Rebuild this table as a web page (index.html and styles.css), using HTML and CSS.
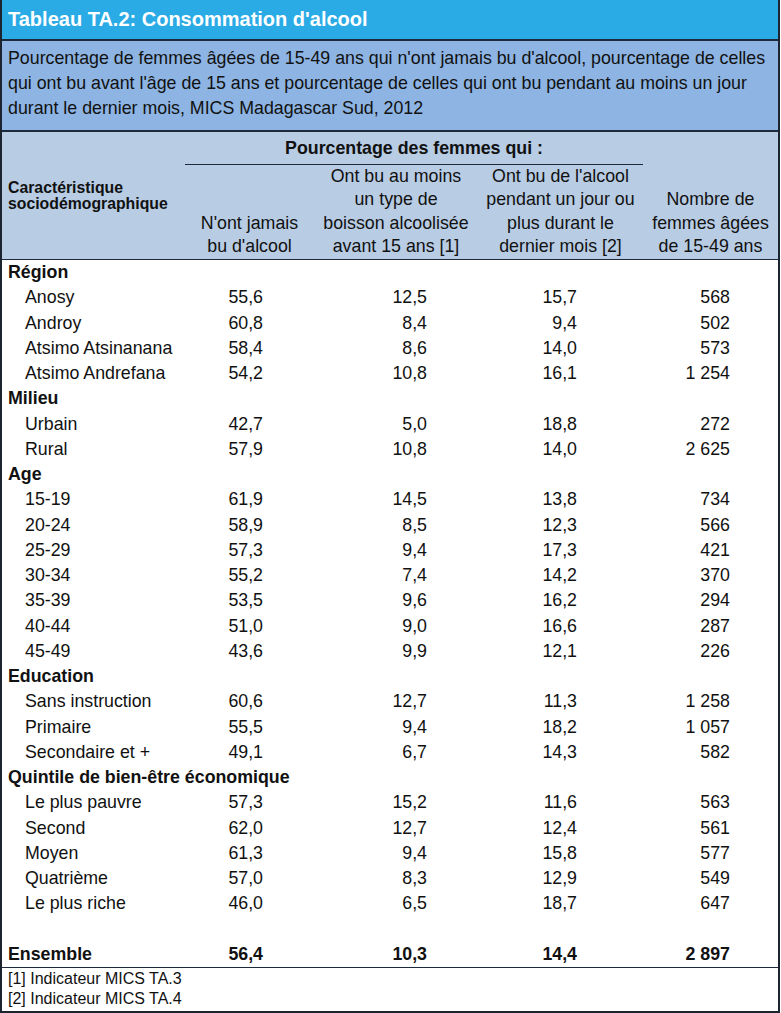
FILE: index.html
```html
<!DOCTYPE html>
<html lang="fr">
<head>
<meta charset="utf-8">
<title>Tableau TA.2</title>
<link rel="stylesheet" href="styles.css">
</head>
<body>
<div class="frame">
  <div class="title">Tableau TA.2: Consommation d'alcool</div>
  <div class="desc">Pourcentage de femmes âgées de 15-49 ans qui n'ont jamais bu d'alcool, pourcentage de celles qui ont bu avant l'âge de 15 ans et pourcentage de celles qui ont bu pendant au moins un jour durant le dernier mois, MICS Madagascar Sud, 2012</div>
  <table class="tbl">
    <colgroup>
      <col class="c0"><col class="c1"><col class="c2"><col class="c3"><col class="c4">
    </colgroup>
    <thead>
      <tr class="h1">
        <th rowspan="2" class="hcar">Caractéristique<br>sociodémographique</th>
        <th colspan="3" class="hgroup">Pourcentage des femmes qui :</th>
        <th rowspan="2" class="hsub">Nombre de<br>femmes âgées<br>de 15-49 ans</th>
      </tr>
      <tr class="h2">
        <th class="hsub">N'ont jamais<br>bu d'alcool</th>
        <th class="hsub">Ont bu au moins<br>un type de<br>boisson alcoolisée<br>avant 15 ans [1]</th>
        <th class="hsub">Ont bu de l'alcool<br>pendant un jour ou<br>plus durant le<br>dernier mois [2]</th>
      </tr>
    </thead>
    <tbody>
      <tr class="grp"><td colspan="5">Région</td></tr>
      <tr><td class="lbl">Anosy</td><td class="n1">55,6</td><td class="n2">12,5</td><td class="n3">15,7</td><td class="n4">568</td></tr>
      <tr><td class="lbl">Androy</td><td class="n1">60,8</td><td class="n2">8,4</td><td class="n3">9,4</td><td class="n4">502</td></tr>
      <tr><td class="lbl">Atsimo Atsinanana</td><td class="n1">58,4</td><td class="n2">8,6</td><td class="n3">14,0</td><td class="n4">573</td></tr>
      <tr><td class="lbl">Atsimo Andrefana</td><td class="n1">54,2</td><td class="n2">10,8</td><td class="n3">16,1</td><td class="n4">1 254</td></tr>
      <tr class="grp"><td colspan="5">Milieu</td></tr>
      <tr><td class="lbl">Urbain</td><td class="n1">42,7</td><td class="n2">5,0</td><td class="n3">18,8</td><td class="n4">272</td></tr>
      <tr><td class="lbl">Rural</td><td class="n1">57,9</td><td class="n2">10,8</td><td class="n3">14,0</td><td class="n4">2 625</td></tr>
      <tr class="grp"><td colspan="5">Age</td></tr>
      <tr><td class="lbl">15-19</td><td class="n1">61,9</td><td class="n2">14,5</td><td class="n3">13,8</td><td class="n4">734</td></tr>
      <tr><td class="lbl">20-24</td><td class="n1">58,9</td><td class="n2">8,5</td><td class="n3">12,3</td><td class="n4">566</td></tr>
      <tr><td class="lbl">25-29</td><td class="n1">57,3</td><td class="n2">9,4</td><td class="n3">17,3</td><td class="n4">421</td></tr>
      <tr><td class="lbl">30-34</td><td class="n1">55,2</td><td class="n2">7,4</td><td class="n3">14,2</td><td class="n4">370</td></tr>
      <tr><td class="lbl">35-39</td><td class="n1">53,5</td><td class="n2">9,6</td><td class="n3">16,2</td><td class="n4">294</td></tr>
      <tr><td class="lbl">40-44</td><td class="n1">51,0</td><td class="n2">9,0</td><td class="n3">16,6</td><td class="n4">287</td></tr>
      <tr><td class="lbl">45-49</td><td class="n1">43,6</td><td class="n2">9,9</td><td class="n3">12,1</td><td class="n4">226</td></tr>
      <tr class="grp"><td colspan="5">Education</td></tr>
      <tr><td class="lbl">Sans instruction</td><td class="n1">60,6</td><td class="n2">12,7</td><td class="n3">11,3</td><td class="n4">1 258</td></tr>
      <tr><td class="lbl">Primaire</td><td class="n1">55,5</td><td class="n2">9,4</td><td class="n3">18,2</td><td class="n4">1 057</td></tr>
      <tr><td class="lbl">Secondaire et +</td><td class="n1">49,1</td><td class="n2">6,7</td><td class="n3">14,3</td><td class="n4">582</td></tr>
      <tr class="grp"><td colspan="5">Quintile de bien-être économique</td></tr>
      <tr><td class="lbl">Le plus pauvre</td><td class="n1">57,3</td><td class="n2">15,2</td><td class="n3">11,6</td><td class="n4">563</td></tr>
      <tr><td class="lbl">Second</td><td class="n1">62,0</td><td class="n2">12,7</td><td class="n3">12,4</td><td class="n4">561</td></tr>
      <tr><td class="lbl">Moyen</td><td class="n1">61,3</td><td class="n2">9,4</td><td class="n3">15,8</td><td class="n4">577</td></tr>
      <tr><td class="lbl">Quatrième</td><td class="n1">57,0</td><td class="n2">8,3</td><td class="n3">12,9</td><td class="n4">549</td></tr>
      <tr><td class="lbl">Le plus riche</td><td class="n1">46,0</td><td class="n2">6,5</td><td class="n3">18,7</td><td class="n4">647</td></tr>
      <tr class="blank"><td colspan="5"></td></tr>
      <tr class="total"><td class="glbl">Ensemble</td><td class="n1">56,4</td><td class="n2">10,3</td><td class="n3">14,4</td><td class="n4">2 897</td></tr>
    </tbody>
  </table>
  <div class="notes">
    <div>[1] Indicateur MICS TA.3</div>
    <div>[2] Indicateur MICS TA.4</div>
  </div>
</div>
</body>
</html>
```

FILE: styles.css
```css
html, body {
  margin: 0;
  padding: 0;
  background: #ffffff;
}

body {
  font-family: "Liberation Sans", Arial, sans-serif;
  color: #111111;
}

.frame {
  width: 780px;
  box-sizing: border-box;
  border-left: 2px solid #1c2430;
  border-right: 2px solid #1c2430;
  border-bottom: 2px solid #1c2430;
}

.title {
  box-sizing: border-box;
  background: #2aabe6;
  color: #ffffff;
  font-weight: bold;
  font-size: 20px;
  padding-left: 6px;
  border-bottom: 2px solid #1c2a3c;
  height: 41px;
  line-height: 38px;
}

.desc {
  background: #8db4e2;
  font-size: 17.8px;
  line-height: 25px;
  padding: 5px 6px 9px 6px;
  height: 91px;
  box-sizing: border-box;
  border-bottom: 2px solid #1c2a3c;
}

.tbl {
  width: 776px;
  border-collapse: collapse;
  table-layout: fixed;
}

.c0 { width: 183px; }
.c1 { width: 129px; }
.c2 { width: 164px; }
.c3 { width: 165px; }
.c4 { width: 135px; }

thead th {
  background: #b8cce4;
  font-weight: normal;
  padding: 0;
}

thead {
  border-bottom: 1.5px solid #1c2a3c;
}

.h1 { height: 32px; }
.h2 { height: 94px; }

.hcar {
  text-align: left;
  font-weight: bold;
  font-size: 15.8px;
  line-height: 16.5px;
  padding-left: 6px;
  vertical-align: middle;
  padding-top: 2px;
}

.hgroup {
  font-weight: bold !important;
  font-size: 17.8px;
  line-height: 22px;
  vertical-align: middle;
  border-bottom: 1.5px solid #1c2a3c;
  padding-top: 0;
}

.hsub {
  font-size: 17.8px;
  line-height: 23.5px;
  vertical-align: bottom;
  text-align: center;
}

tbody td {
  height: 25.25px;
  padding: 0;
  font-size: 17.8px;
  line-height: 20px;
  white-space: nowrap;
  vertical-align: middle;
}

.grp td {
  font-weight: bold;
  padding-left: 6px;
}

.lbl {
  padding-left: 23px !important;
}

.glbl {
  padding-left: 6px !important;
  font-weight: bold;
}

.n1, .n2, .n3, .n4 {
  text-align: right;
}

.n1 { padding-right: 51px !important; }
.n2 { padding-right: 51px !important; }
.n3 { padding-right: 66px !important; }
.n4 { padding-right: 48px !important; }

.total td {
  font-weight: bold;
  border-bottom: 1.5px solid #1c2a3c;
}

.notes {
  font-size: 16px;
  line-height: 20.5px;
  padding: 1px 6px 0 6px;
  height: 42px;
}
```
